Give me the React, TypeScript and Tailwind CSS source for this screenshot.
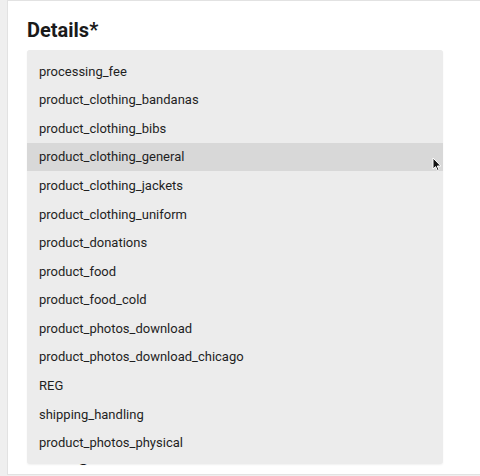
import React from "react";

const items = [
  "processing_fee",
  "product_clothing_bandanas",
  "product_clothing_bibs",
  "product_clothing_general",
  "product_clothing_jackets",
  "product_clothing_uniform",
  "product_donations",
  "product_food",
  "product_food_cold",
  "product_photos_download",
  "product_photos_download_chicago",
  "REG",
  "shipping_handling",
  "product_photos_physical",
];

export default function App() {
  return (
    <div
      className="w-[480px] h-[476px] bg-[#efefef] flex overflow-hidden"
      style={{ fontFamily: "Roboto, 'Noto Sans', sans-serif" }}
    >
      <div className="w-[7px] shrink-0 bg-[#efefef]" />
      <div className="flex-1 bg-white border-l border-[#e2e2e2] border-t border-b h-[475px] relative overflow-hidden">
        <div className="pl-[19px] pt-[15px]">
          <h2 className="text-[20px] font-bold text-[#1a1a1a] leading-[28px]">Details*</h2>
          <div className="mt-[6px] w-[416px] h-[36px] bg-[#ececec] rounded" />
          <div className="h-[354px]" />
          <h2 className="text-[20px] font-bold text-[#1a1a1a] leading-[28px] tracking-[-0.3px]">Pricing</h2>
        </div>

        <div className="absolute left-[19px] top-[49px] w-[416px] bg-[#ececec] rounded-[3px] py-[7px] shadow-[0_1px_2px_rgba(0,0,0,0.06)]">
          {items.map((it, i) => (
            <div
              key={it}
              className={
                "h-[28.6px] flex items-center px-[12px] text-[13px] text-[#1f1f1f] " +
                (i === 3 ? "bg-[#d8d8d8]" : "")
              }
            >
              {it}
            </div>
          ))}
        </div>

        <svg
          className="absolute left-[424px] top-[156px]"
          width="10"
          height="15"
          viewBox="0 0 10 15"
        >
          <path
            d="M1 1 L1 12 L3.6 9.6 L5.4 13.6 L7 12.9 L5.3 9 L8.8 9 Z"
            fill="#111"
            stroke="#fff"
            strokeWidth="1"
            strokeLinejoin="round"
          />
        </svg>
      </div>
    </div>
  );
}
